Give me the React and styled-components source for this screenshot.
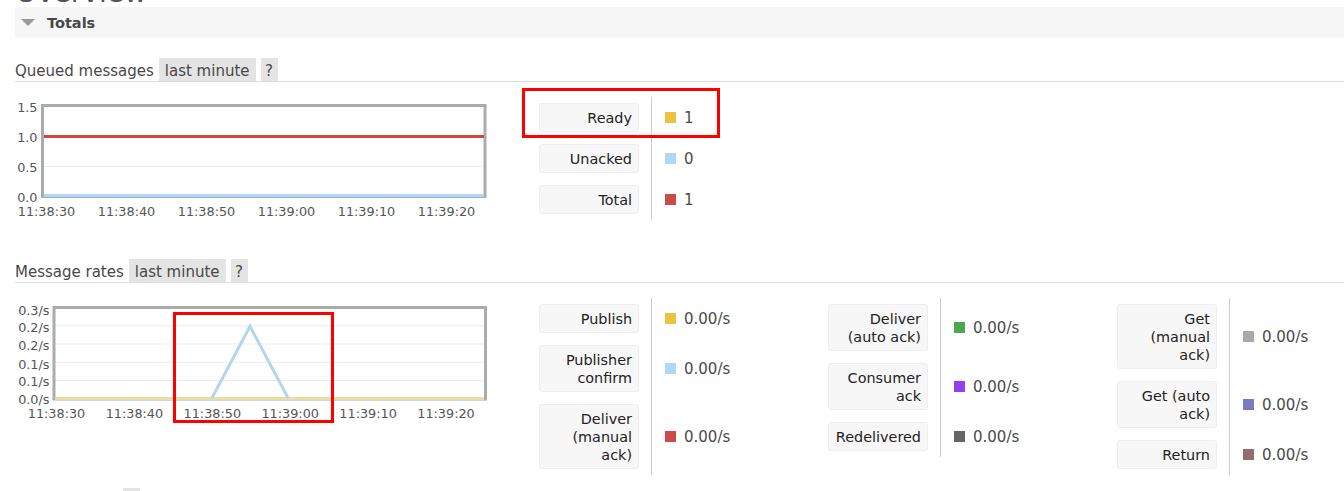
import React from "react";
import styled, { createGlobalStyle } from "styled-components";

const GlobalStyle = createGlobalStyle`
  html, body {
    margin: 0;
    padding: 0;
    background: #fff;
  }
  body {
    font-family: "DejaVu Sans", Verdana, sans-serif;
    color: #484848;
    overflow: hidden;
  }
`;

const queued = [
  { label: "Ready", color: "#edc240", value: "1" },
  { label: "Unacked", color: "#afd8f8", value: "0" },
  { label: "Total", color: "#cb4b4b", value: "1" },
];

const rates = [
  [
    { label: "Publish", color: "#edc240", value: "0.00/s" },
    { label: "Publisher confirm", color: "#afd8f8", value: "0.00/s" },
    { label: "Deliver (manual ack)", color: "#cb4b4b", value: "0.00/s" },
  ],
  [
    { label: "Deliver (auto ack)", color: "#4da74d", value: "0.00/s" },
    { label: "Consumer ack", color: "#9440ed", value: "0.00/s" },
    { label: "Redelivered", color: "#666666", value: "0.00/s" },
  ],
  [
    { label: "Get (manual ack)", color: "#aaaaaa", value: "0.00/s" },
    { label: "Get (auto ack)", color: "#7c79c3", value: "0.00/s" },
    { label: "Return", color: "#956d6d", value: "0.00/s" },
  ],
];

const times = ["11:38:30", "11:38:40", "11:38:50", "11:39:00", "11:39:10", "11:39:20"];

const Legend = ({ rows }) => (
  <LegendTable>
    {rows.map((r) => (
      <LegendRow key={r.label}>
        <LabelCell>
          <LabelBox>{r.label}</LabelBox>
        </LabelCell>
        <ValueCell>
          <Swatch $color={r.color} />
          {r.value}
        </ValueCell>
      </LegendRow>
    ))}
  </LegendTable>
);

// queued messages chart, drawn in page coordinates
const QueuedChart = () => {
  const ticks = [
    ["1.5", 112],
    ["1.0", 142],
    ["0.5", 172],
    ["0.0", 202],
  ];
  return (
    <svg width="509" height="125" viewBox="15 97 509 125">
      <line x1="44" x2="484" y1="166.5" y2="166.5" stroke="#ebebeb" />
      <rect x="42.5" y="105.5" width="442.5" height="91" fill="none" stroke="#ababab" strokeWidth="3" />
      <line x1="44" x2="484" y1="136.5" y2="136.5" stroke="#d1473f" strokeWidth="3" />
      <line x1="44" x2="484" y1="195.5" y2="195.5" stroke="#afd8f8" strokeWidth="3" />
      {ticks.map(([t, y]) => (
        <AxisText key={t} x="37.5" y={y} textAnchor="end">
          {t}
        </AxisText>
      ))}
      {times.map((t, i) => (
        <AxisText key={t} x={46.5 + i * 80} y="216" textAnchor="middle">
          {t}
        </AxisText>
      ))}
    </svg>
  );
};

const RatesChart = () => {
  const ticks = [
    ["0.3/s", 315],
    ["0.2/s", 332],
    ["0.2/s", 350],
    ["0.1/s", 369],
    ["0.1/s", 386],
    ["0.0/s", 404],
  ];
  const grid = [325.8, 344, 362.3, 380.5];
  return (
    <svg width="509" height="125" viewBox="15 298 509 125">
      {grid.map((y) => (
        <line key={y} x1="55" x2="484" y1={y} y2={y} stroke="#ebebeb" />
      ))}
      <rect x="54" y="307.5" width="431.5" height="91.5" fill="none" stroke="#ababab" strokeWidth="3" />
      <line x1="55" x2="484" y1="398.5" y2="398.5" stroke="#e6dfa3" strokeWidth="3" />
      <polyline
        points="211.7,398.5 250,326.3 288.3,398.5"
        fill="none"
        stroke="#b3d6ea"
        strokeWidth="3"
        strokeLinejoin="miter"
      />
      {ticks.map(([t, y], i) => (
        <AxisText key={i} x="49.5" y={y} textAnchor="end">
          {t}
        </AxisText>
      ))}
      {times.map((t, i) => (
        <AxisText key={t} x={56.5 + i * 77.9} y="418.3" textAnchor="middle">
          {t}
        </AxisText>
      ))}
    </svg>
  );
};

export default function App() {
  return (
    <>
      <GlobalStyle />
      <Page>
        <Title>Overview</Title>
        <TotalsBar>
          <Caret />
          Totals
        </TotalsBar>

        <SubHeader $top={20}>
          Queued messages
          <Pill $pad={6}>last minute</Pill>
          <Pill $pad={4.5}>?</Pill>
        </SubHeader>
        <ChartRow>
          <ChartArea>
            <QueuedChart />
          </ChartArea>
          <Legend rows={queued} />
        </ChartRow>

        <SubHeader $top={37}>
          Message rates
          <Pill $pad={6}>last minute</Pill>
          <Pill $pad={4.5}>?</Pill>
        </SubHeader>
        <ChartRow>
          <ChartArea>
            <RatesChart />
          </ChartArea>
          {rates.map((rows, i) => (
            <Legend key={i} rows={rows} />
          ))}
        </ChartRow>

        <SubHeader $top={13}>
          Global counts
          <Pill $pad={4.5}>?</Pill>
        </SubHeader>

        <Highlight $x={522} $y={88} $w={198} $h={50} />
        <Highlight $x={173} $y={312} $w={161} $h={111} />
      </Page>
    </>
  );
}

const Page = styled.div`
  position: relative;
  display: flow-root;
  height: 491px;
  overflow: hidden;
  padding-left: 15px;
`;

const Title = styled.h1`
  margin: -22px 0 0;
  height: 29px;
  font-size: 28px;
  line-height: 29px;
  font-weight: normal;
  color: #555;
`;

const TotalsBar = styled.div`
  display: flex;
  align-items: center;
  gap: 12px;
  height: 31px;
  padding-left: 6px;
  background: #f6f6f6;
  font-size: 14.5px;
  font-weight: bold;
  color: #484848;
`;

const Caret = styled.span`
  width: 0;
  height: 0;
  border-left: 7px solid transparent;
  border-right: 7px solid transparent;
  border-top: 7px solid #999;
`;

const SubHeader = styled.div`
  display: flex;
  gap: 5px;
  height: 23px;
  line-height: 27px;
  margin-top: ${(p) => p.$top}px;
  border-bottom: 1px solid #ddd;
  font-size: 15px;
  color: #484848;
  white-space: nowrap;
`;

const Pill = styled.span`
  background: #e4e4e4;
  padding: 0 ${(p) => p.$pad}px;
`;

const ChartRow = styled.div`
  display: flex;
  align-items: flex-start;
  margin-top: 15px;
`;

const ChartArea = styled.div`
  flex: 0 0 524px;
  svg {
    display: block;
  }
`;

const AxisText = styled.text`
  font-family: "DejaVu Sans", Verdana, sans-serif;
  font-size: 12.8px;
  fill: #545454;
`;

const LegendTable = styled.div`
  flex: 0 0 289px;
  display: flex;
  flex-direction: column;
`;

const LegendRow = styled.div`
  display: flex;
`;

const LabelCell = styled.div`
  flex: 0 0 112px;
  box-sizing: border-box;
  padding: 6px 12px 6px 0;
`;

const LabelBox = styled.div`
  background: #f7f7f7;
  border: 1px solid #eeeeee;
  border-radius: 3px;
  padding: 4.5px 6px;
  text-align: right;
  font-size: 14.4px;
  line-height: 18px;
  color: #222;
`;

const ValueCell = styled.div`
  display: flex;
  align-items: center;
  gap: 8px;
  padding-left: 13px;
  border-left: 1px solid #ccc;
  font-size: 15px;
  color: #4a4a4a;
`;

const Swatch = styled.span`
  width: 11px;
  height: 11px;
  background: ${(p) => p.$color};
`;

const Highlight = styled.div`
  position: absolute;
  left: ${(p) => p.$x}px;
  top: ${(p) => p.$y}px;
  width: ${(p) => p.$w}px;
  height: ${(p) => p.$h}px;
  box-sizing: border-box;
  border: 3px solid #f00;
  pointer-events: none;
`;
